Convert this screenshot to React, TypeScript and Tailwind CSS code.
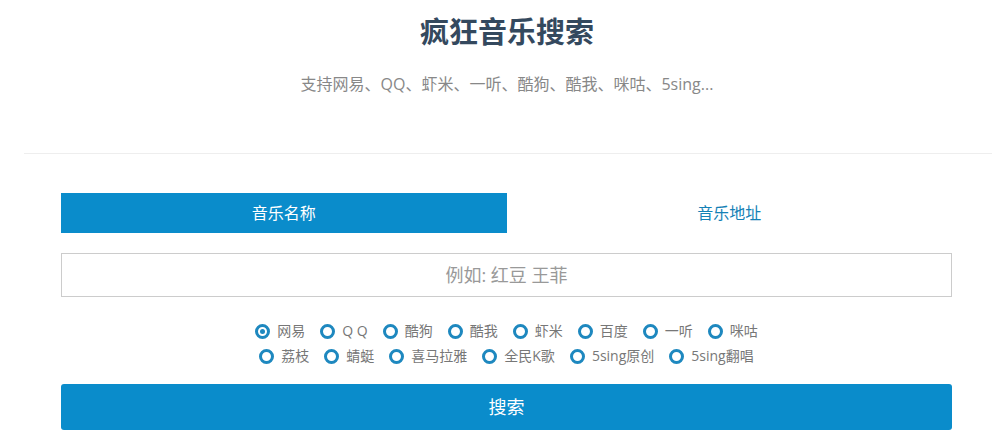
import { useState } from "react";

const platforms = [
    [
        ["netease", "网易"],
        ["qq", "Q Q"],
        ["kugou", "酷狗"],
        ["kuwo", "酷我"],
        ["xiami", "虾米"],
        ["baidu", "百度"],
        ["1ting", "一听"],
        ["migu", "咪咕"],
    ],
    [
        ["lizhi", "荔枝"],
        ["qingting", "蜻蜓"],
        ["ximalaya", "喜马拉雅"],
        ["kg", "全民K歌"],
        ["5singyc", "5sing原创"],
        ["5singfc", "5sing翻唱"],
    ],
];

const App: React.FC = () => {
    const [tab, setTab] = useState<'name' | 'url'>('name');
    const [source, setSource] = useState('netease');
    const [keyword, setKeyword] = useState('');

    return (
        <div className="bg-white min-h-[441px] font-['Open_Sans','Noto_Sans_CJK_SC',sans-serif]">
            {/* Header */}
            <div className="pt-[14px] pl-[17px] text-center">
                <h1 className="text-[29px] leading-[36px] font-bold text-[#34495e]">疯狂音乐搜索</h1>
                <p className="mt-[24px] text-[16px] leading-[20px] text-[#888]">支持网易、QQ、虾米、一听、酷狗、酷我、咪咕、5sing...</p>
            </div>
            <div className="ml-[24px] w-[968px] mt-[59px] border-t border-[#eee]" />

            {/* Search form */}
            <div className="ml-[61px] w-[891px] mt-[39px]">
                <div className="grid grid-cols-2 h-[40px]">
                    <button
                        onClick={() => setTab('name')}
                        className={`text-[16px] ${tab === 'name' ? 'bg-[#0a8ccb] text-white' : 'text-[#1581b6]'}`}
                    >
                        音乐名称
                    </button>
                    <button
                        onClick={() => setTab('url')}
                        className={`text-[16px] ${tab === 'url' ? 'bg-[#0a8ccb] text-white' : 'text-[#1581b6]'}`}
                    >
                        音乐地址
                    </button>
                </div>

                <input
                    type="text"
                    value={keyword}
                    onChange={(e) => setKeyword(e.target.value)}
                    placeholder={tab === 'name' ? '例如: 红豆 王菲' : '例如: http://music.163.com/#/song?id=65536'}
                    className="mt-[20px] w-full h-[44px] border border-[#ccc] text-center text-[18px] text-[#555] placeholder:text-[#999] outline-none"
                />

                <div className="mt-[24px] flex flex-col gap-[5px] text-[14px] leading-[20px] text-[#777]">
                    {platforms.map((row, i) => (
                        <div key={i} className="flex justify-center gap-x-[15px]">
                            {row.map(([value, label]) => (
                                <label key={value} className="flex items-center gap-[7px] cursor-pointer" onClick={() => setSource(value)}>
                                    <span className="w-[15px] h-[15px] rounded-full border-[3px] border-[#1e88bf] flex items-center justify-center">
                                        {source === value && <span className="w-[5px] h-[5px] rounded-full bg-[#1e88bf]" />}
                                    </span>
                                    <span>{label}</span>
                                </label>
                            ))}
                        </div>
                    ))}
                </div>

                <button className="mt-[18px] w-full h-[46px] rounded-[3px] bg-[#0a8ccb] text-white text-[18px]">
                    搜索
                </button>
            </div>
        </div>
    );
};

export default App;
